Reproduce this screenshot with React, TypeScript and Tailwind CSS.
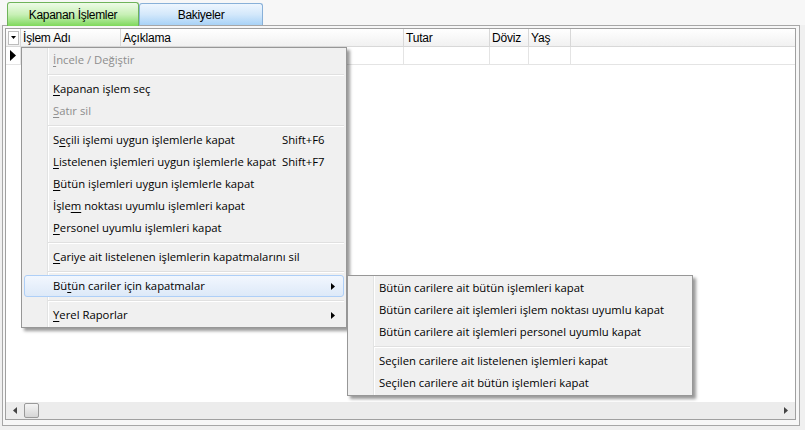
import React from "react";

type Item =
  | { sep: true }
  | {
      sep?: false;
      label: React.ReactNode;
      disabled?: boolean;
      shortcut?: string;
      sub?: boolean;
      active?: boolean;
    };

const u = (c: string) => <span className="underline underline-offset-[2px]">{c}</span>;

const mainItems: Item[] = [
  { label: <>{u("İ")}ncele / Değiştir</>, disabled: true },
  { sep: true },
  { label: <>{u("K")}apanan işlem seç</> },
  { label: <>{u("S")}atır sil</>, disabled: true },
  { sep: true },
  { label: <>S{u("e")}çili işlemi uygun işlemlerle kapat</>, shortcut: "Shift+F6" },
  { label: <>{u("L")}istelenen işlemleri uygun işlemlerle kapat</>, shortcut: "Shift+F7" },
  { label: <>{u("B")}ütün işlemleri uygun işlemlerle kapat</> },
  { label: <>İşle{u("m")} noktası uyumlu işlemleri kapat</> },
  { label: <>{u("P")}ersonel uyumlu işlemleri kapat</> },
  { sep: true },
  { label: <>{u("C")}ariye ait listelenen işlemlerin kapatmalarını sil</> },
  { sep: true },
  { label: <>Bü{u("t")}ün cariler için kapatmalar</>, sub: true, active: true },
  { sep: true },
  { label: <>{u("Y")}erel Raporlar</>, sub: true },
];

const subItems: Item[] = [
  { label: "Bütün carilere ait bütün işlemleri kapat" },
  { label: "Bütün carilere ait işlemleri işlem noktası uyumlu kapat" },
  { label: "Bütün carilere ait işlemleri personel uyumlu kapat" },
  { sep: true },
  { label: "Seçilen carilere ait listelenen işlemleri kapat" },
  { label: "Seçilen carilere ait bütün işlemleri kapat" },
];

function Menu({ items, className }: { items: Item[]; className: string }) {
  return (
    <div
      className={
        "absolute border border-[#979797] bg-[#f0f0f0] shadow-[3px_3px_3px_rgba(0,0,0,0.4)] " + className
      }
      style={{ fontFamily: '"Open Sans", "Noto Sans", sans-serif' }}
    >
      {/* icon gutter line */}
      <div className="absolute left-[25px] top-0 bottom-0 w-[1px] bg-[#e2e3e3]" />
      <div className="absolute left-[26px] top-0 bottom-0 w-[1px] bg-white" />
      <div className="relative flex flex-col">
        {items.map((it, i) =>
          it.sep ? (
            <div key={i} className="h-[7px] flex flex-col justify-center pl-[26px] pr-[2px]">
              <div className="h-[1px] bg-[#e0e0e0]" />
              <div className="h-[1px] bg-white" />
            </div>
          ) : (
            <div
              key={i}
              className={
                "mx-[2px] h-[22px] flex items-center pl-[28px] rounded-[3px] border text-[11.3px] whitespace-nowrap " +
                (it.active
                  ? "border-[#aecff7] bg-gradient-to-b from-[#f2f7fe] to-[#dde9f8]"
                  : "border-transparent") +
                (it.disabled ? " text-[#8d8d8d]" : " text-black")
              }
            >
              <span className="w-[229px] shrink-0">{it.label}</span>
              {it.shortcut && <span>{it.shortcut}</span>}
              {it.sub && (
                <svg className="ml-auto mr-[8px]" width="4" height="7" viewBox="0 0 4 7">
                  <path d="M0 0 L4 3.5 L0 7 Z" fill="#000" />
                </svg>
              )}
            </div>
          )
        )}
      </div>
    </div>
  );
}

const cols = [
  { w: "w-[100px]", t: "İşlem Adı" },
  { w: "w-[283px]", t: "Açıklama" },
  { w: "w-[86px]", t: "Tutar" },
  { w: "w-[39px]", t: "Döviz" },
  { w: "w-[42px]", t: "Yaş" },
];

export default function App() {
  return (
    <div
      className="relative w-[805px] h-[430px] overflow-hidden bg-[#f0f0f0] text-black"
      style={{ fontFamily: '"Liberation Sans", Arial, sans-serif' }}
    >
      {/* tabs */}
      <div className="h-[25px] bg-[#f7f7f7] flex items-end pl-[7px] pr-[5px]">
        <div className="relative z-10 w-[132px] h-[24px] -mb-[1px] rounded-t-[3px] border border-b-0 border-[#6fb35a] bg-gradient-to-b from-[#eefbe8] via-[#c8f0b6] to-[#7ed85a] flex items-center justify-center text-[12px] tracking-[-0.3px]">
          Kapanan İşlemler
        </div>
        <div className="w-[124px] h-[22px] rounded-t-[3px] border border-b-0 border-[#88b0d8] bg-gradient-to-b from-[#eef6fe] via-[#d3e8fb] to-[#a8d2f6] flex items-center justify-center text-[12px] tracking-[-0.3px]">
          Bakiyeler
        </div>
      </div>

      {/* panel */}
      <div className="mx-[2px] w-[798px] h-[401px] border border-[#a7a7a7] bg-[#f7f7f7] pt-[2px] pl-[2px]">
        <div className="w-[791px] h-[392px] border border-[#a0a0a0] bg-white flex flex-col">
          {/* header */}
          <div className="h-[18px] flex text-[12px] tracking-[-0.2px] border-b border-[#d8d8d8] bg-gradient-to-b from-white to-[#f1f1f1]">
            <div className="w-[15px] border-r border-[#d8d8d8] flex items-center justify-center">
              <div className="w-[11px] h-[14px] border border-[#bdbdbd] bg-white flex items-center justify-center">
                <svg width="5" height="3" viewBox="0 0 5 3">
                  <path d="M0 0 H5 L2.5 3 Z" fill="#000" />
                </svg>
              </div>
            </div>
            {cols.map((c) => (
              <div key={c.t} className={c.w + " border-r border-[#d8d8d8] pl-[2px] flex items-center"}>
                {c.t}
              </div>
            ))}
          </div>
          {/* row */}
          <div className="h-[18px] flex border-b border-[#e4e4e4]">
            <div className="w-[15px] border-r border-[#e4e4e4] flex items-center justify-center">
              <svg width="6" height="11" viewBox="0 0 6 11">
                <path d="M0 0 L6 5.5 L0 11 Z" fill="#000" />
              </svg>
            </div>
            {cols.map((c) => (
              <div key={c.t} className={c.w + " border-r border-[#e4e4e4]"} />
            ))}
          </div>
          <div className="flex-1" />
          {/* horizontal scrollbar */}
          <div className="h-[17px] bg-[#ececec] flex items-center">
            <div className="w-[18px] flex justify-center">
              <svg width="4" height="7" viewBox="0 0 4 7">
                <path d="M4 0 L0 3.5 L4 7 Z" fill="#444" />
              </svg>
            </div>
            <div className="w-[15px] h-[15px] rounded-[2px] border border-[#9a9a9a] bg-gradient-to-b from-[#f5f5f5] to-[#d6d6d6]" />
            <div className="flex-1" />
            <div className="w-[18px] flex justify-center">
              <svg width="4" height="7" viewBox="0 0 4 7">
                <path d="M0 0 L4 3.5 L0 7 Z" fill="#444" />
              </svg>
            </div>
          </div>
        </div>
      </div>

      <Menu items={mainItems} className="left-[21px] top-[47px] w-[326px] py-[1px]" />
      <Menu items={subItems} className="left-[347px] top-[275px] w-[346px] py-[1px]" />
    </div>
  );
}
